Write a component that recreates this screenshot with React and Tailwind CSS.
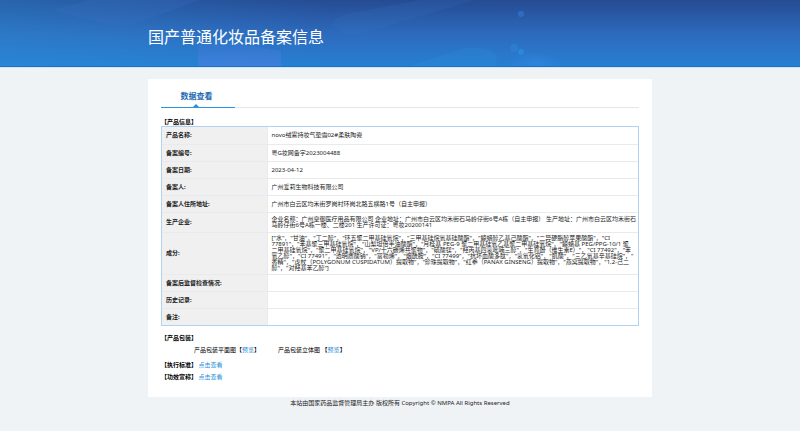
import { Fragment } from 'react';

const rows = [
  { label: '产品名称:', lines: ['novo绒雾持妆气垫霜02#柔肤陶瓷'], height: 'h-[17px]' },
  { label: '备案编号:', lines: ['粤G妆网备字2023004488'], height: 'h-[17px]' },
  { label: '备案日期:', lines: ['2023-04-12'], height: 'h-[17px]' },
  { label: '备案人:', lines: ['广州爱莉生物科技有限公司'], height: 'h-[17px]' },
  { label: '备案人住所地址:', lines: ['广州市白云区均禾街罗岗村环岗北路五横路1号（自主申报）'], height: 'h-[17px]' },
  {
    label: '生产企业:',
    lines: [
      '企业名称：广州皇御医疗用品有限公司 企业地址：广州市白云区均禾街石马岭仔街6号A栋（自主申报） 生产地址：广州市白云区均禾街石',
      '马岭仔街6号A栋一楼、二楼201 生产许可证：粤妆20200141',
    ],
    height: 'h-[20px]',
  },
  {
    label: '成分:',
    lines: [
      '["水"，"甘油"，"丁二醇"，"环五聚二甲基硅氧烷"，"三甲基硅烷氧基硅酸酯"，"鲸蜡醇乙基己酸酯"，"二异硬脂醇苹果酸酯"，"CI',
      '77891"，"苯基聚三甲基硅氧烷"，"山梨坦倍半油酸酯"，"月桂基 PEG-9 聚二甲基硅氧乙基聚二甲基硅氧烷"，"鲸蜡基 PEG/PPG-10/1 聚',
      '二甲基硅氧烷"，"聚二甲基硅氧烷"，"VP/十六碳烯共聚物"，"硫酸镁"，"羟丙基四氢吡喃三醇"，"生育酚（维生素E）"，"CI 77492"，"苯',
      '氧乙醇"，"CI 77491"，"透明质酸钠"，"富勒烯"，"烟酰胺"，"CI 77499"，"抗坏血酸多肽"，"氢氧化铝"，"肌酸"，"三乙氧基辛基硅烷"，"',
      '香精"，"虎杖（POLYGONUM CUSPIDATUM）提取物"，"珍珠提取物"，"红参（PANAX GINSENG）提取物"，"燕窝提取物"，"1,2-己二',
      '醇"，"对羟基苯乙醇"]',
    ],
    height: 'h-[42px]',
  },
  { label: '备案后监督检查情况:', lines: [], height: 'h-[17px]' },
  { label: '历史记录:', lines: [], height: 'h-[17px]' },
  { label: '备注:', lines: [], height: 'h-[17px]' },
];

function Banner() {
  return (
    <header className="relative h-[68px] overflow-hidden border-b border-[#d3e5f7] bg-linear-to-b from-[#264b93] via-[#2d6abd] to-[#2680d3]">
      <svg className="absolute inset-0 h-full w-full" viewBox="0 0 800 67" preserveAspectRatio="none" aria-hidden="true">
        <defs>
          <linearGradient id="left" x1="0" x2="1">
            <stop offset="0" stopColor="#2b93da" stopOpacity="0.35" />
            <stop offset="1" stopColor="#2b93da" stopOpacity="0" />
          </linearGradient>
          <linearGradient id="fade" x1="0" x2="0" y1="0" y2="1">
            <stop offset="0" stopColor="#4378d8" stopOpacity="0.2" />
            <stop offset="1" stopColor="#4080dc" stopOpacity="0.9" />
          </linearGradient>
          <radialGradient id="glow">
            <stop offset="0" stopColor="#3488e4" stopOpacity="0.6" />
            <stop offset="1" stopColor="#3488e4" stopOpacity="0" />
          </radialGradient>
        </defs>
        <rect width="330" height="67" fill="url(#left)" />
        <path d="M52 10 90 0H200L132 25H108Z" fill="#3b71c4" opacity="0.25" />
        <path d="M198 42 240 44 281 51V67H198Z" fill="url(#fade)" />
        <path d="M346 14 420 0H475L360 34Q345 36 332 25 332 18 346 14Z" fill="#3a82c8" opacity="0.14" />
        <path d="M414 64 465 48Q495 46 497 58L496 67H410Z" fill="#2d90dc" opacity="0.25" />
        <ellipse cx="535" cy="64" rx="26" ry="12" fill="url(#glow)" />
        <circle cx="521" cy="14" r="3" fill="#2f78cd" opacity="0.7" />
        <circle cx="514" cy="48" r="4" fill="#2d8cdf" opacity="0.4" />
        <circle cx="521" cy="52" r="3" fill="#2d93e8" opacity="0.6" />
        <rect y="66" width="800" height="1" fill="#1873c8" />
      </svg>
      <h1 className="relative mx-auto max-w-[504px] pt-[25px] text-[16px] leading-6 font-normal text-white">
        国产普通化妆品备案信息
      </h1>
    </header>
  );
}

function LinkText({ children }) {
  return <a href="#" className="text-[#2b8fda]">{children}</a>;
}

export default function App() {
  return (
    <div className="min-h-screen bg-[#eff3f6] font-['Noto_Sans','Noto_Sans_CJK_SC',sans-serif] text-[6px] leading-[8px] text-[#222]">
      <Banner />
      <main className="mx-auto mt-[11px] max-w-[504px] bg-white px-[13px] pb-4">
        <nav className="flex h-[29px] border-b border-[#e3e7ea]">
          <a href="#" className="relative -mb-px flex w-[74px] items-center justify-center border-b border-[#2b95e0] pt-[5px] pr-[3px] text-[8px] font-bold text-[#1c6ab0]">
            数据查看
            <svg className="absolute bottom-0 left-[32px]" width="6" height="3" viewBox="0 0 6 3" aria-hidden="true">
              <path d="M0 3 3 0 6 3Z" fill="#2b8fd8" />
            </svg>
          </a>
        </nav>

        <h2 className="mt-[10px] font-bold text-black">【产品信息】</h2>
        <div className="border border-[#b3d2f2]">
          <table className="w-full table-fixed border-collapse">
            <tbody>
              {rows.map((row) => (
                <tr key={row.label} className={`border-b border-[#e8eaec] last:border-b-0 ${row.height}`}>
                  <th scope="row" className="w-[105px] border-r border-[#e8eaec] bg-[#f0f0f0] p-0 pl-1 text-left align-middle font-bold">
                    {row.label}
                  </th>
                  <td className="p-0 pl-1 align-middle leading-[6px] whitespace-nowrap">
                    {row.lines.map((line, i) => (
                      <Fragment key={line}>
                        {i > 0 && <br />}
                        {line}
                      </Fragment>
                    ))}
                  </td>
                </tr>
              ))}
            </tbody>
          </table>
        </div>

        <h2 className="mt-2 font-bold text-black">【产品包装】</h2>
        <div className="mt-1 flex gap-[18px] pl-[33px] text-black">
          <p>产品包装平面图【<LinkText>预览</LinkText>】</p>
          <p>产品包装立体图 【<LinkText>预览</LinkText>】</p>
        </div>
        <p className="mt-[7px]"><b className="text-black">【执行标准】</b> <LinkText>点击查看</LinkText></p>
        <p className="mt-1"><b className="text-black">【功效宣称】</b> <LinkText>点击查看</LinkText></p>
      </main>
      <footer className="pt-[2px] text-center">
        本站由国家药品监督管理局主办 版权所有 Copyright © NMPA All Rights Reserved
      </footer>
    </div>
  );
}
